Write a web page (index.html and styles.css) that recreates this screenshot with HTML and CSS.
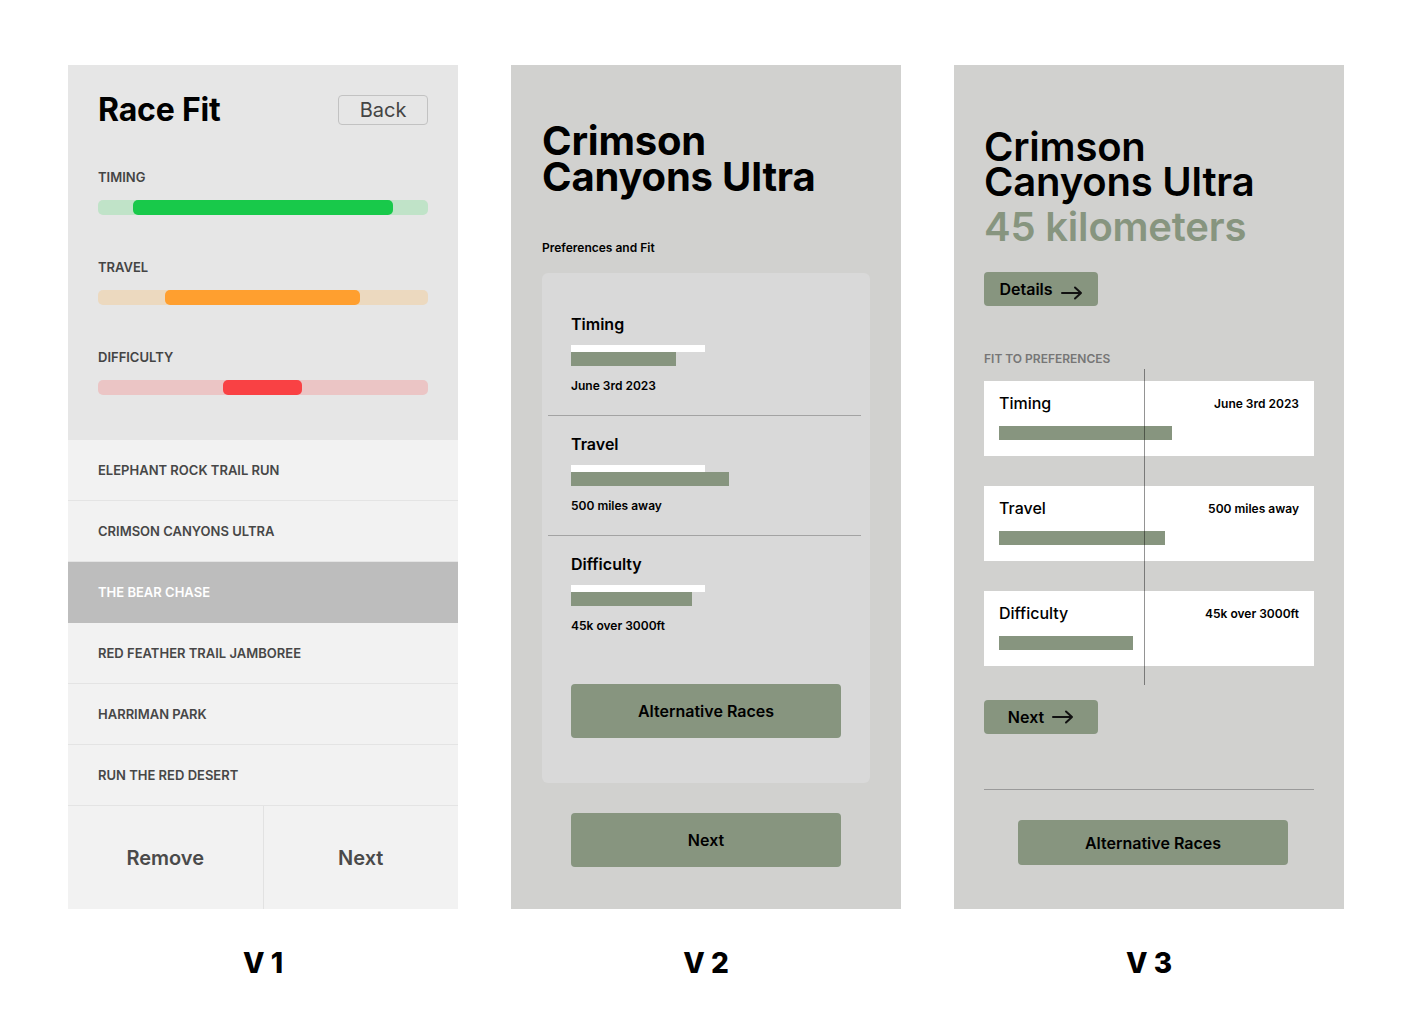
FILE: index.html
```html
<!DOCTYPE html>
<html>
<head>
<meta charset="utf-8">
<link rel="stylesheet" href="styles.css">
</head>
<body>
<div class="board">
  <!-- V1 -->
  <div class="col">
    <section class="panel v1">
      <div class="v1-top">
        <div class="v1-header">
          <h1 class="v1-title">Race Fit</h1>
          <button class="back-btn">Back</button>
        </div>
        <div class="metrics">
          <div class="metric">
            <div class="metric-label">TIMING</div>
            <div class="track track-green"><div class="fill fill-green" style="left:35px;width:260px"></div></div>
          </div>
          <div class="metric">
            <div class="metric-label">TRAVEL</div>
            <div class="track track-orange"><div class="fill fill-orange" style="left:67px;width:195px"></div></div>
          </div>
          <div class="metric">
            <div class="metric-label">DIFFICULTY</div>
            <div class="track track-red"><div class="fill fill-red" style="left:125px;width:79px"></div></div>
          </div>
        </div>
      </div>
      <ul class="race-list">
        <li class="race-row">ELEPHANT ROCK TRAIL RUN</li>
        <li class="race-row">CRIMSON CANYONS ULTRA</li>
        <li class="race-row selected">THE BEAR CHASE</li>
        <li class="race-row">RED FEATHER TRAIL JAMBOREE</li>
        <li class="race-row">HARRIMAN PARK</li>
        <li class="race-row">RUN THE RED DESERT</li>
      </ul>
      <div class="v1-actions">
        <button class="v1-action">Remove</button>
        <button class="v1-action">Next</button>
      </div>
    </section>
    <div class="version">V 1</div>
  </div>

  <!-- V2 -->
  <div class="col">
    <section class="panel v2">
      <h1 class="v2-title"><span class="title-line">Crimson</span><span class="title-line">Canyons Ultra</span></h1>
      <div class="v2-sub">Preferences and Fit</div>
      <div class="v2-card">
        <div class="v2-sec first">
          <div class="v2-sec-title">Timing</div>
          <div class="v2-ref"></div>
          <div class="v2-bar" style="width:105px"></div>
          <div class="v2-note">June 3rd 2023</div>
        </div>
        <div class="v2-divider"></div>
        <div class="v2-sec">
          <div class="v2-sec-title">Travel</div>
          <div class="v2-ref"></div>
          <div class="v2-bar" style="width:158px"></div>
          <div class="v2-note">500 miles away</div>
        </div>
        <div class="v2-divider"></div>
        <div class="v2-sec">
          <div class="v2-sec-title">Difficulty</div>
          <div class="v2-ref"></div>
          <div class="v2-bar" style="width:121px"></div>
          <div class="v2-note">45k over 3000ft</div>
        </div>
        <button class="green-btn v2-btn v2-alt">Alternative Races</button>
      </div>
      <button class="green-btn v2-btn v2-next">Next</button>
    </section>
    <div class="version">V 2</div>
  </div>

  <!-- V3 -->
  <div class="col">
    <section class="panel v3">
      <h1 class="v3-title"><span class="title-line">Crimson</span><span class="title-line">Canyons Ultra</span></h1>
      <div class="v3-distance">45 kilometers</div>
      <button class="green-btn small-btn details-btn">Details
        <svg class="arrow arrow-low" width="22" height="14" viewBox="0 0 22 14"><path d="M1 7H20M14 1.5L20 7L14 12.5" fill="none" stroke="#111" stroke-width="2" stroke-linecap="round" stroke-linejoin="round"/></svg>
      </button>
      <div class="v3-label">FIT TO PREFERENCES</div>
      <div class="v3-cards">
        <div class="v3-card">
          <div class="v3-card-head"><span class="v3-card-title">Timing</span><span class="v3-card-note">June 3rd 2023</span></div>
          <div class="v3-bar" style="width:173px"></div>
        </div>
        <div class="v3-card">
          <div class="v3-card-head"><span class="v3-card-title">Travel</span><span class="v3-card-note">500 miles away</span></div>
          <div class="v3-bar" style="width:166px"></div>
        </div>
        <div class="v3-card">
          <div class="v3-card-head"><span class="v3-card-title">Difficulty</span><span class="v3-card-note">45k over 3000ft</span></div>
          <div class="v3-bar" style="width:134px"></div>
        </div>
        <div class="v3-guide"></div>
      </div>
      <button class="green-btn small-btn next-btn">Next
        <svg class="arrow" width="22" height="14" viewBox="0 0 22 14"><path d="M1 7H20M14 1.5L20 7L14 12.5" fill="none" stroke="#111" stroke-width="2" stroke-linecap="round" stroke-linejoin="round"/></svg>
      </button>
      <div class="v3-divider"></div>
      <button class="green-btn v3-alt">Alternative Races</button>
    </section>
    <div class="version">V 3</div>
  </div>
</div>
</body>
</html>
```

FILE: styles.css
```css
* { box-sizing: border-box; }
html, body { margin: 0; padding: 0; background: #ffffff; }
body { font-family: Inter, "Noto Sans", "Liberation Sans", sans-serif; color: #000; }
button { font-family: inherit; cursor: pointer; }
h1 { margin: 0; }

.board {
  display: flex;
  gap: 53px;
  padding: 65px 0 0 68px;
}
.col { display: flex; flex-direction: column; align-items: center; width: 390px; }
.panel { width: 390px; height: 844px; display: flex; flex-direction: column; }
.version {
  margin-top: 37px;
  font-size: 28px;
  line-height: 34px;
  font-weight: 800;
  color: #000;
}

/* ---------- V1 ---------- */
.v1 { background: #f2f2f2; }
.v1-top {
  background: #e6e6e6;
  height: 375px;
  padding: 30px 30px 0 30px;
}
.v1-header { display: flex; justify-content: space-between; align-items: flex-start; }
.v1-title { font-size: 32px; line-height: 30px; font-weight: 700; color: #000; letter-spacing: -0.2px; }
.back-btn {
  width: 90px; height: 30px;
  background: transparent;
  border: 1px solid #c2c2c2;
  border-radius: 4px;
  font-size: 20px; color: #444; font-weight: 400;
  padding: 0;
}
.metrics { margin-top: 44px; display: flex; flex-direction: column; gap: 44px; }
.metric-label { font-size: 13px; line-height: 16px; font-weight: 600; color: #444; margin-bottom: 15px; }
.track { position: relative; height: 15px; border-radius: 5px; }
.fill { position: absolute; top: 0; bottom: 0; border-radius: 5px; }
.track-green { background: #c0e3c8; }
.fill-green { background: #18c94a; }
.track-orange { background: #ecd9bf; }
.fill-orange { background: #ff9f2f; }
.track-red { background: #ebc5c5; }
.fill-red { background: #f94144; }

.race-list { list-style: none; margin: 0; padding: 0; }
.race-row {
  height: 61px;
  display: flex; align-items: center;
  padding-left: 30px;
  border-bottom: 1px solid #e4e4e4;
  font-size: 13px; font-weight: 600; color: #474747;
}
.race-row.selected { background: #bdbdbd; color: #fff; border-bottom-color: #bdbdbd; }
.v1-actions { flex: 1; display: flex; }
.v1-action {
  flex: 1;
  background: transparent; border: none;
  font-size: 20px; font-weight: 600; color: #4a4a4a;
  padding: 0;
}
.v1-action + .v1-action { border-left: 1px solid #e2e2e2; }

/* ---------- shared green ---------- */
.green-btn {
  background: #87957f;
  border: none;
  border-radius: 4px;
  color: #000;
  font-size: 16px;
  font-weight: 600;
  padding: 0;
}

/* ---------- titles ---------- */
.title-line { display: block; height: 36px; line-height: 36px; white-space: nowrap; }

/* ---------- V2 ---------- */
.v2 { background: #d1d1cf; padding: 58px 31px 0 31px; }
.v2-title { font-size: 40px; font-weight: 700; color: #000; letter-spacing: -0.2px; }
.v2-sub { margin-top: 45px; font-size: 12px; line-height: 15px; font-weight: 600; }
.v2-card {
  margin-top: 18px;
  width: 328px; height: 510px;
  background: #d9d9d9;
  border-radius: 6px;
  padding: 20px 0 0 0;
  display: flex; flex-direction: column;
}
.v2-sec { padding: 0 0 22px 29px; display: flex; flex-direction: column; align-items: flex-start; }
.v2-sec.first { padding-top: 21px; }
.v2-divider { height: 1px; background: #a3a3a3; margin: 0 9px 0 6px; }
.v2-divider + .v2-sec { padding-top: 18px; }
.v2-sec-title { font-size: 16px; line-height: 20px; font-weight: 600; margin-bottom: 11px; }
.v2-ref { width: 134px; height: 7px; background: #fff; }
.v2-bar { height: 14px; background: #87957f; }
.v2-note { margin-top: 12px; font-size: 12px; line-height: 15px; font-weight: 600; }
.v2-btn { width: 270px; height: 54px; }
.v2-alt { margin: 29px 0 0 29px; }
.v2-next { margin: 30px 0 0 29px; }

/* ---------- V3 ---------- */
.v3 { background: #d1d1cf; padding: 64px 30px 0 30px; }
.v3-title { font-size: 40px; font-weight: 600; color: #000; letter-spacing: -0.2px; }
.v3-title .title-line { height: 35px; line-height: 35px; }
.v3-distance { margin-top: 10px; font-size: 40px; line-height: 35px; font-weight: 600; color: #87957f; letter-spacing: -0.2px; white-space: nowrap; }
.small-btn {
  width: 114px; height: 34px;
  display: flex; align-items: center; justify-content: center; gap: 8px;
}
.details-btn { margin-top: 28px; }
.arrow { display: block; }
.arrow-low { transform: translateY(4px); }
.v3-label { margin-top: 45px; font-size: 12px; line-height: 15px; font-weight: 600; color: #767676; }
.v3-cards { position: relative; margin-top: 15px; display: flex; flex-direction: column; gap: 30px; }
.v3-card { background: #fff; height: 75px; padding: 12px 15px 0 15px; }
.v3-card-head { display: flex; justify-content: space-between; align-items: center; height: 20px; }
.v3-card-title { font-size: 16px; font-weight: 500; }
.v3-card-note { font-size: 12px; font-weight: 600; }
.v3-bar { margin-top: 13px; height: 14px; background: #87957f; }
.v3-guide {
  position: absolute;
  left: 160px; top: -12px; bottom: -19px;
  width: 1px;
  background: rgba(0, 0, 0, 0.42);
}
.next-btn { margin-top: 34px; }
.v3-divider { margin-top: 55px; height: 1px; background: #9a9a9a; }
.v3-alt { margin: 30px 0 0 34px; width: 270px; height: 45px; }
```
